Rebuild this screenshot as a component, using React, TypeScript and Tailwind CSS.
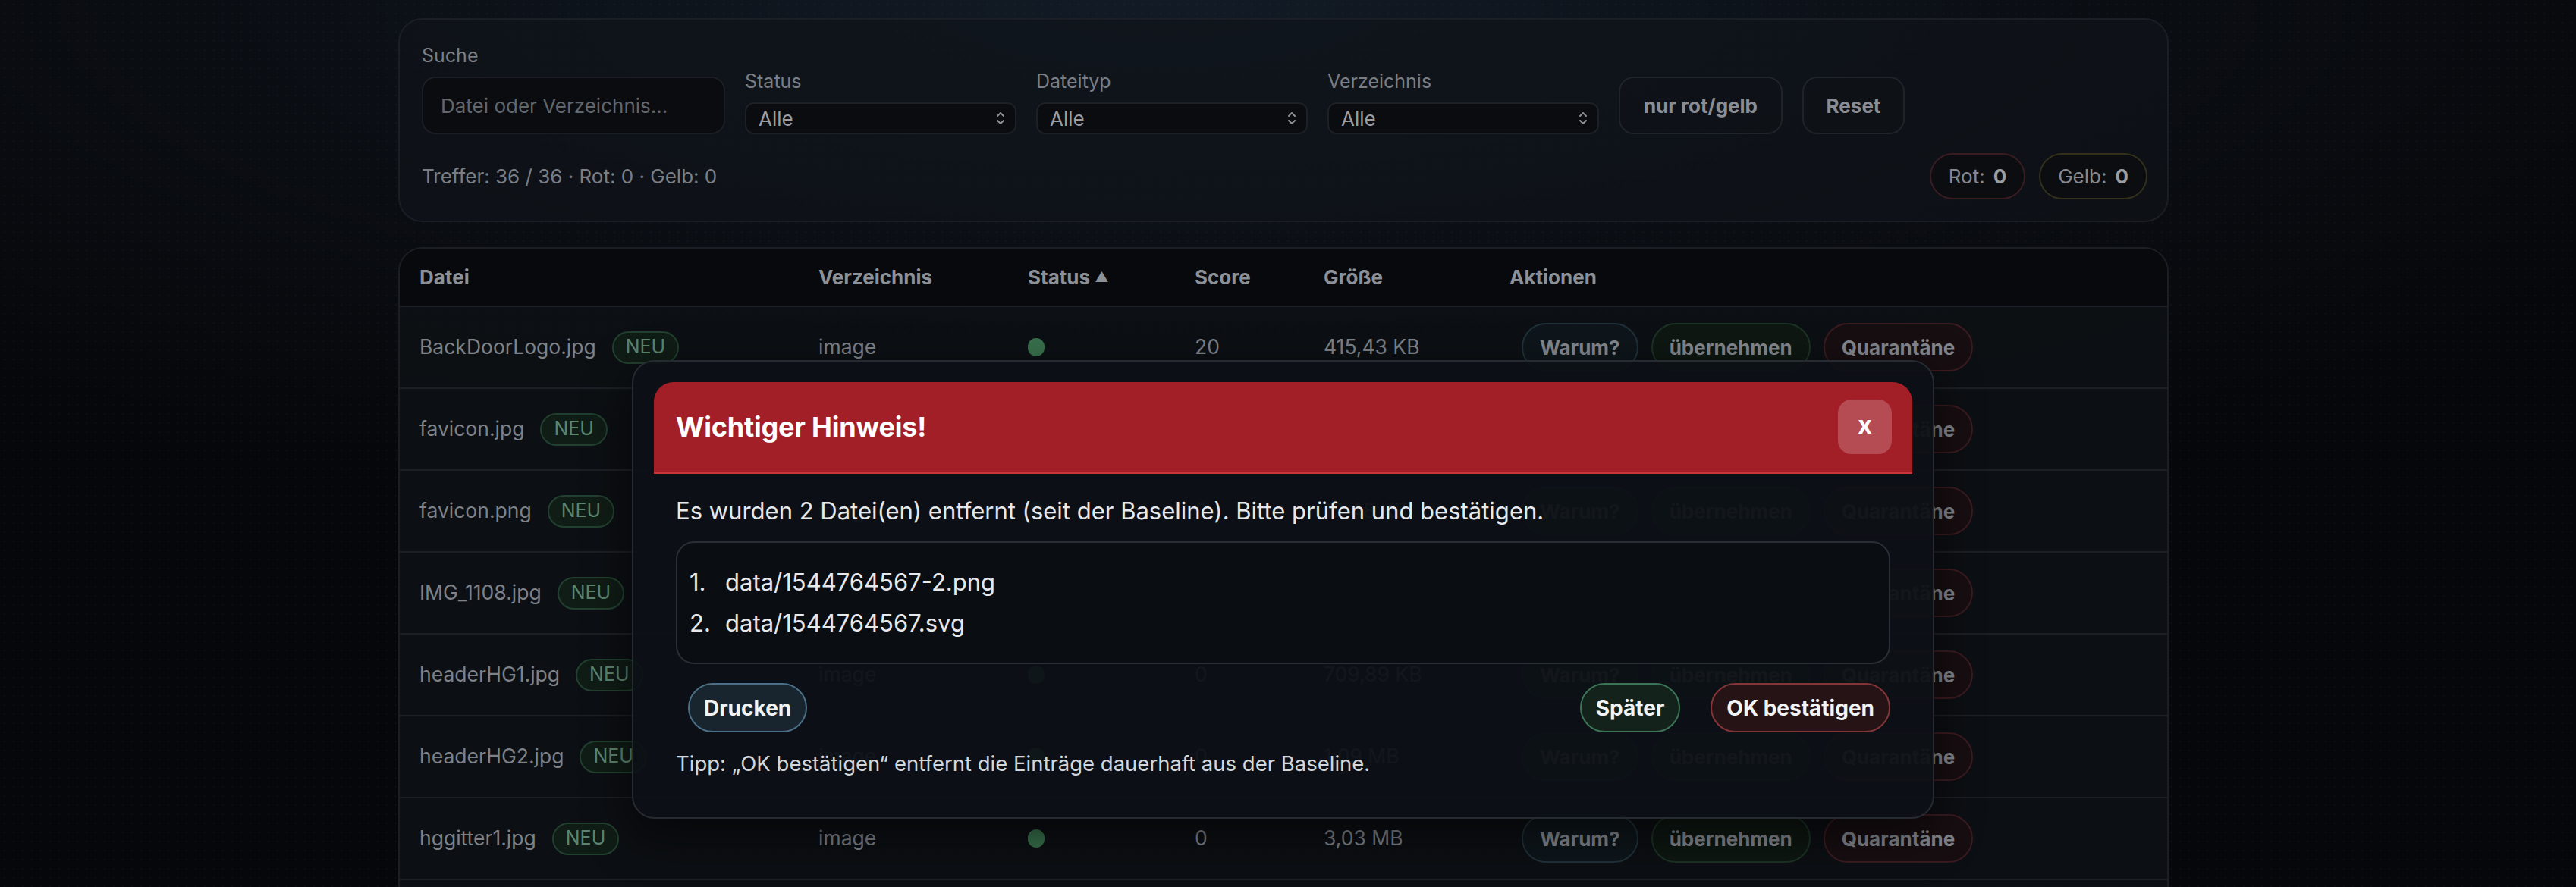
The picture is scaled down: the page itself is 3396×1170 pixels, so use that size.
import React from 'react';

const rows = [
  { name: 'BackDoorLogo.jpg', dir: 'image', score: '20', size: '415,43 KB' },
  { name: 'favicon.jpg', dir: 'image', score: '0', size: '4,19 KB' },
  { name: 'favicon.png', dir: 'image', score: '0', size: '12,48 KB' },
  { name: 'IMG_1108.jpg', dir: 'image', score: '20', size: '469,20 KB' },
  { name: 'headerHG1.jpg', dir: 'image', score: '0', size: '709,89 KB' },
  { name: 'headerHG2.jpg', dir: 'image', score: '0', size: '1,09 MB' },
  { name: 'hggitter1.jpg', dir: 'image', score: '0', size: '3,03 MB' },
];

const removed = ['data/1544764567-2.png', 'data/1544764567.svg'];

const Chevrons = () => (
  <svg width="14" height="22" viewBox="0 0 14 22" fill="none" stroke="#8d9197" strokeWidth="2" strokeLinecap="round" strokeLinejoin="round">
    <path d="M3 8l4-4 4 4" />
    <path d="M3 14l4 4 4-4" />
  </svg>
);

const SelectBox = ({ label }: { label: string }) => (
  <div className="flex flex-col w-[358px]">
    <span className="text-[25px] leading-[30px] text-[#7a7e84] mb-[13px]">{label}</span>
    <div className="h-[42px] rounded-[12px] border-2 border-[#1d2127] bg-[#0a0c10] flex items-center justify-between pl-[16px] pr-[12px]">
      <span className="text-[26px] text-[#9a9ea4]">Alle</span>
      <Chevrons />
    </div>
  </div>
);

const FilterPanel = () => (
  <div className="rounded-[32px] border-2 border-[#1b1f25] bg-[#10141a]/70 px-[29px] pt-[32px] pb-[28px]">
    <div className="flex items-end gap-[26px]">
      <div className="flex flex-col w-[400px]">
        <span className="text-[25px] leading-[30px] text-[#7a7e84] mb-[13px]">Suche</span>
        <div className="h-[76px] rounded-[18px] border-2 border-[#1b1f25] bg-[#0a0c10] flex items-center px-[23px]">
          <span className="text-[26px] text-[#62666d]">Datei oder Verzeichnis...</span>
        </div>
      </div>
      <SelectBox label="Status" />
      <SelectBox label="Dateityp" />
      <SelectBox label="Verzeichnis" />
      <button className="h-[76px] w-[216px] rounded-[20px] border-2 border-[#1f232a] bg-[#0f1217]/60 text-[26px] font-bold text-[#8a8e94]">
        nur rot/gelb
      </button>
      <button className="h-[76px] w-[135px] rounded-[20px] border-2 border-[#1f232a] bg-[#0f1217]/60 text-[26px] font-bold text-[#8a8e94]">
        Reset
      </button>
    </div>
    <div className="flex items-center justify-between mt-[25px]">
      <span className="text-[26px] text-[#7b7f85]">Treffer: 36 / 36 · Rot: 0 · Gelb: 0</span>
      <div className="flex items-center gap-[18px] mr-[-3px]">
        <div className="h-[61px] rounded-full border-2 border-[#3a1c21] bg-[#0b0d11] flex items-center px-[23px] gap-[11px] text-[26px] text-[#86898f]">
          <span>Rot:</span>
          <span className="font-bold text-[#9a9da2]">0</span>
        </div>
        <div className="h-[61px] rounded-full border-2 border-[#33301b] bg-[#0b0d11] flex items-center px-[23px] gap-[11px] text-[26px] text-[#86898f]">
          <span>Gelb:</span>
          <span className="font-bold text-[#9a9da2]">0</span>
        </div>
      </div>
    </div>
  </div>
);

const cols = 'grid grid-cols-[526px_276px_220px_170px_245px_1fr] items-center pl-[26px]';

const Table = () => (
  <div className="mt-[33px] rounded-[32px] border-2 border-[#1b1f25] overflow-hidden">
    <div className={`${cols} h-[75px] bg-[#07090c] text-[26px] font-bold text-[#8c9097]`}>
      <span>Datei</span>
      <span>Verzeichnis</span>
      <span className="flex items-center gap-[6px]">
        Status <span className="text-[18px]">▲</span>
      </span>
      <span>Score</span>
      <span>Größe</span>
      <span>Aktionen</span>
    </div>
    {rows.map((r) => (
      <div key={r.name} className={`${cols} h-[108px] border-t-2 border-[#1c2026] bg-[#0e1115]/80 text-[26.5px] text-[#7e8288]`}>
        <div className="flex items-center gap-[21px]">
          <span>{r.name}</span>
          <span className="h-[43px] rounded-full border-2 border-[#22402f] bg-[#101c16] px-[16px] flex items-center text-[25px] text-[#5c8570]">
            NEU
          </span>
        </div>
        <span>{r.dir}</span>
        <span className="w-[22px] h-[24px] rounded-full bg-[#38704c]" />
        <span>{r.score}</span>
        <span>{r.size}</span>
        <div className="flex items-center gap-[17px] ml-[16px] text-[26px]">
          <button className="h-[64px] rounded-full border-2 border-[#20313a] bg-[#0e161b] px-[22px] font-bold text-[#84888e]">
            Warum?
          </button>
          <button className="h-[64px] rounded-full border-2 border-[#1c3325] bg-[#0e1712] px-[22px] font-bold text-[#84888e]">
            übernehmen
          </button>
          <button className="h-[64px] rounded-full border-2 border-[#3b1b20] bg-[#170e11] px-[22px] font-bold text-[#84888e]">
            Quarantäne
          </button>
        </div>
      </div>
    ))}
    <div className="h-[60px] border-t-2 border-[#1c2026] bg-[#0e1115]/80" />
  </div>
);

const Modal = () => (
  <div className="absolute left-[833px] top-[475px] w-[1717px] rounded-[30px] border-2 border-[#262a31] bg-[#0d1116]/[0.95] px-[27px] pt-[27px] pb-[54px] shadow-[0_20px_60px_rgba(0,0,0,0.6)]">
    <div className="h-[121px] rounded-t-[26px] bg-[#a31f28] border-b-[3px] border-[#c8363d] flex items-center justify-between pl-[29px] pr-[27px]">
      <span className="text-[36px] font-bold text-white tracking-[-0.2px]">Wichtiger Hinweis!</span>
      <button className="w-[71px] h-[72px] rounded-[18px] bg-white/20 text-white text-[32px] font-bold flex items-center justify-center pb-[4px]">
        x
      </button>
    </div>
    <div className="px-[29px]">
      <p className="mt-[30px] text-[31px] leading-[38px] text-[#e6e8eb]">
        Es wurden 2 Datei(en) entfernt (seit der Baseline). Bitte prüfen und bestätigen.
      </p>
      <div className="mt-[21px] rounded-[24px] border-2 border-[#2a2e35] bg-[#0a0d11] pl-[16px] pt-[25px] pb-[25px]">
        {removed.map((f, i) => (
          <div key={f} className="flex h-[54px] items-center text-[31px] text-[#e6e8eb]">
            <span className="w-[47px]">{i + 1}.</span>
            <span>{f}</span>
          </div>
        ))}
      </div>
      <div className="mt-[25px] flex items-center justify-between pl-[16px]">
        <button className="h-[65px] rounded-full border-2 border-[#4a6f86] bg-[#18252e] px-[19px] text-[28px] font-bold text-[#f1f3f5]">
          Drucken
        </button>
        <div className="flex items-center gap-[40px]">
          <button className="h-[65px] rounded-full border-2 border-[#3c7555] bg-[#13221b] px-[19px] text-[28px] font-bold text-[#f1f3f5]">
            Später
          </button>
          <button className="h-[65px] rounded-full border-2 border-[#853538] bg-[#251316] px-[19px] text-[28px] font-bold text-[#f1f3f5]">
            OK bestätigen
          </button>
        </div>
      </div>
      <p className="mt-[24px] text-[27.5px] leading-[34px] text-[#d3d6da]">
        Tipp: „OK bestätigen“ entfernt die Einträge dauerhaft aus der Baseline.
      </p>
    </div>
  </div>
);

export default function App() {
  return (
    <div className="relative h-[1170px] w-full overflow-hidden font-['Inter','Noto_Sans',sans-serif] bg-[radial-gradient(ellipse_70%_60%_at_45%_0%,#121b26_0%,#0a0d12_55%,#05070a_100%)]">
      <div className="absolute inset-0 bg-[radial-gradient(rgba(255,255,255,0.022)_1.2px,transparent_1.8px)] bg-[size:12px_12px]" />
      <div className="relative ml-[525px] w-[2334px] pt-[24px]">
        <FilterPanel />
        <Table />
      </div>
      <Modal />
    </div>
  );
}
